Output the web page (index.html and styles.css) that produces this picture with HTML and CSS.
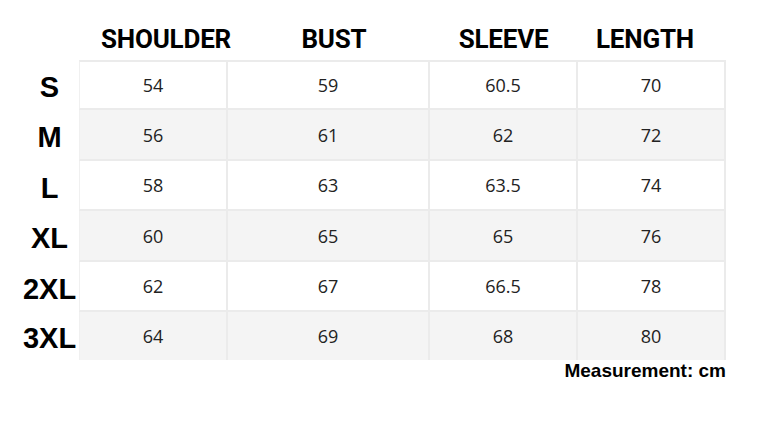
FILE: index.html
```html
<!DOCTYPE html>
<html lang="en">
<head>
<meta charset="utf-8">
<title>Size chart</title>
<link rel="stylesheet" href="styles.css">
</head>
<body>
<div class="chart">
  <div class="head">
    <div class="hcell">SHOULDER</div>
    <div class="hcell">BUST</div>
    <div class="hcell">SLEEVE</div>
    <div class="hcell">LENGTH</div>
  </div>
  <div class="rows">
    <div class="row first"><div class="size">S</div><div class="cell">54</div><div class="cell">59</div><div class="cell">60.5</div><div class="cell">70</div></div>
    <div class="row alt"><div class="size">M</div><div class="cell">56</div><div class="cell">61</div><div class="cell">62</div><div class="cell">72</div></div>
    <div class="row"><div class="size">L</div><div class="cell">58</div><div class="cell">63</div><div class="cell">63.5</div><div class="cell">74</div></div>
    <div class="row alt"><div class="size">XL</div><div class="cell">60</div><div class="cell">65</div><div class="cell">65</div><div class="cell">76</div></div>
    <div class="row"><div class="size">2XL</div><div class="cell">62</div><div class="cell">67</div><div class="cell">66.5</div><div class="cell">78</div></div>
    <div class="row alt last"><div class="size">3XL</div><div class="cell">64</div><div class="cell">69</div><div class="cell">68</div><div class="cell">80</div></div>
  </div>
  <div class="note">Measurement: cm</div>
</div>
</body>
</html>
```

FILE: styles.css
```css
html, body {
  margin: 0;
  padding: 0;
  background: #ffffff;
}

.chart {
  width: 766px;
  height: 428px;
  display: flex;
  flex-direction: column;
}

.head {
  height: 60px;
  box-sizing: border-box;
  padding-left: 79px;
  padding-top: 17px;
  display: grid;
  grid-template-columns: 174px 162px 177px 106px;
  align-items: center;
}

.hcell {
  height: 43px;
  display: flex;
  align-items: center;
  justify-content: center;
  font-family: Roboto, "Liberation Sans", sans-serif;
  font-weight: 700;
  font-size: 26px;
  letter-spacing: -0.2px;
  color: #000;
}

.rows {
  display: flex;
  flex-direction: column;
  padding-left: 20px;
}

.row {
  height: 50px;
  display: grid;
  grid-template-columns: 59px 149px 202px 148px 148px;
}

.row.alt { height: 51px; }
.row.last { height: 48px; }

.size {
  display: flex;
  align-items: center;
  justify-content: center;
  padding-top: 4px;
  box-sizing: border-box;
  font-family: "Liberation Sans", Arial, sans-serif;
  font-weight: 700;
  font-size: 29px;
  color: #000;
}

.cell {
  display: flex;
  align-items: center;
  justify-content: center;
  box-sizing: border-box;
  border-right: 2px solid #ebebeb;
  border-bottom: 2px solid #ebebeb;
  background: #ffffff;
  font-family: "Open Sans", "Noto Sans", sans-serif;
  font-size: 18px;
  color: #222;
}

.row .size + .cell {
  border-left: 1px solid #f0f0f0;
}

.row.first .cell {
  border-top: 2px solid #ebebeb;
}

.row.alt .cell {
  background: #f4f4f4;
}

.row.last .cell {
  border-bottom: none;
}

.note {
  width: 726px;
  text-align: right;
  font-family: "Liberation Sans", Arial, sans-serif;
  font-weight: 700;
  font-size: 19px;
  color: #000;
}
```
